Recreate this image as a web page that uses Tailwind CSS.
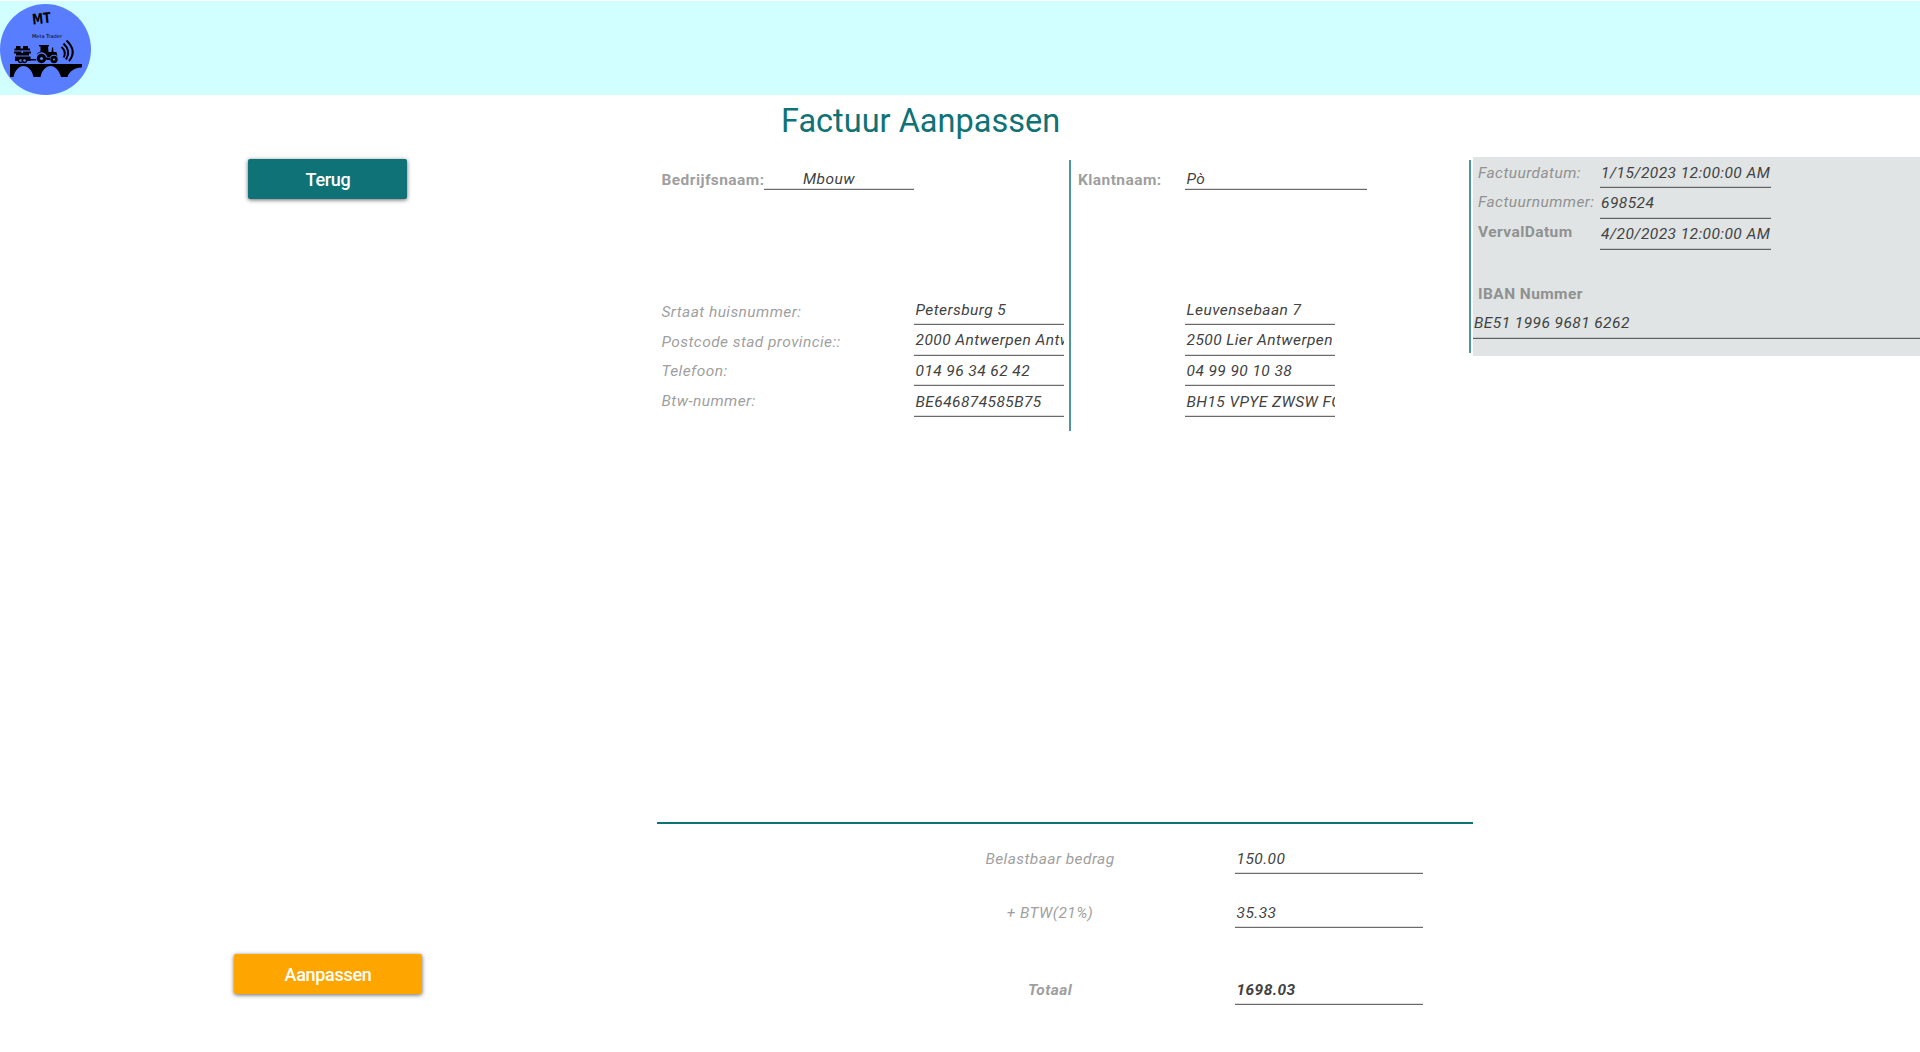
<!DOCTYPE html>
<html lang="nl">
<head>
<meta charset="utf-8">
<title>Factuur Aanpassen</title>
<script src="https://cdn.jsdelivr.net/npm/@tailwindcss/browser@4"></script>
</head>
<body class="flex h-[1052px] w-[1920px] flex-col overflow-hidden bg-white pt-px font-['Roboto',sans-serif] text-[15.5px] leading-5 tracking-[0.43px] text-[#424242]">
<header class="flex h-[94px] shrink-0 items-end bg-[#d1ffff]">
  <svg class="h-[91px] w-[91px] tracking-normal" viewBox="0 0 91 91">
    <circle cx="45.5" cy="45.5" r="45.5" fill="#587dff"/>
    <g transform="rotate(-6 41 13)" fill="#000" font-family="DejaVu Sans" font-weight="bold">
      <text x="32" y="19.500" font-size="14.500" textLength="18.500" lengthAdjust="spacingAndGlyphs">MT</text>
    </g>
    <text x="32" y="33.500" font-size="5" font-family="DejaVu Sans" textLength="30" lengthAdjust="spacingAndGlyphs">Meta Trader</text>
    <!-- bridge -->
    <path d="M10 60H82V63.500C76 63 69 67 67.500 73H61C59 66 55 62 50.500 62S42 66 40.500 73H33.500C32 66 28 62 23.500 62S15 66 13.500 73H10Z"/>
    <!-- cart -->
    <path d="M15 52.500H30.500V57H15ZM14 47.500H21.500V49H23V47.500H31V49.500H29V51.500H16V49.500H14ZM16 42H20.500V44.500H23V42H28V44.500H30V46.500H14.500V44.500H16ZM30.500 55H37V56.500H30.500Z"/>
    <g fill="#587dff" stroke="#000" stroke-width="1.300"><circle cx="20.500" cy="56.500" r="2"/><circle cx="24.500" cy="56.500" r="2"/></g>
    <!-- tractor -->
    <path d="M39 41H49V42.500H48L48.500 48H51.500L52 44L53 43L53.500 48H56.500L57.500 53H37V50C38 48.500 39 48 40.500 47.500V42.500H39Z"/>
    <circle cx="41.500" cy="54" r="5.700" fill="#587dff"/><circle cx="54" cy="55.300" r="4.500" fill="#587dff"/>
    <circle cx="41.500" cy="54.500" r="4.700"/><circle cx="54" cy="55.500" r="3.700"/>
    <circle cx="41.500" cy="54.500" r="1.600" fill="#587dff"/><circle cx="54" cy="55.500" r="1.100" fill="#587dff"/>
    <path d="M45.500 53.500H50V56H46.500Z"/>
    <!-- signal -->
    <g fill="none" stroke="#000" stroke-width="2"><path d="M61.500 43Q67 48 63.500 53.500"/><path d="M63.500 39.500Q71.500 47 66 55.500"/><path d="M66.500 36.500Q77.500 47 69 57"/></g>
  </svg>
</header>

<main class="grid min-h-0 flex-1 grid-cols-[657px_816px_447px] grid-rows-[62px_1fr]">
  <h1 class="col-span-3 pt-[6px] pl-[781px] text-[32.5px] leading-[40px] tracking-normal text-[#0e7276]">Factuur Aanpassen</h1>

  <aside class="flex flex-col items-center justify-between pb-[58px] pt-[2px] pr-[2px] text-lg font-medium tracking-[-0.3px] text-white">
    <button class="h-10 w-[159px] rounded-[2px] bg-[#0e7276] pt-[2px] pl-px shadow-[0_1px_4px_rgba(0,0,0,.6)]">Terug</button>
    <button class="h-10 w-[188px] rounded-[2px] bg-[#ffa500] pt-[2px] pl-px shadow-[0_1px_4px_rgba(0,0,0,.6)]">Aanpassen</button>
  </aside>

  <section class="flex flex-col">
    <div class="flex h-[274px] pt-[3px]">
      <div class="flex h-[271px] w-[414px] flex-col border-r-2 border-[#4d979a] pl-[4.5px]">
        <div class="flex h-[30px] items-end">
          <label class="w-[102.5px] font-bold whitespace-nowrap text-[#9f9f9f]">Bedrijfsnaam:</label>
          <div class="h-[30px] w-[150px] border-b border-[#6b6b6b] pt-[9px] pl-[39px] italic shadow-[inset_0_-1px_0_#ddd]">Mbouw</div>
        </div>
        <div class="mt-[104px] flex">
          <div class="w-[252.5px] pt-2 text-[#9f9f9f] italic">
            <p class="h-[30px]">Srtaat huisnummer:</p>
            <p class="h-[29px]">Postcode stad provincie::</p>
            <p class="h-[30px]">Telefoon:</p>
            <p>Btw-nummer:</p>
          </div>
          <div class="w-[150px] overflow-hidden whitespace-nowrap italic">
            <p class="h-[31px] border-b border-[#6b6b6b] pt-[6px] pl-[1.5px] shadow-[inset_0_-1px_0_#ddd]">Petersburg 5</p>
            <p class="h-[31px] border-b border-[#6b6b6b] pt-[5px] pl-[1.5px] shadow-[inset_0_-1px_0_#ddd]">2000 Antwerpen Antwerpen</p>
            <p class="h-[30px] border-b border-[#6b6b6b] pt-[5px] pl-[1.5px] shadow-[inset_0_-1px_0_#ddd]">014 96 34 62 42</p>
            <p class="h-[31px] border-b border-[#6b6b6b] pt-[6px] pl-[1.5px] shadow-[inset_0_-1px_0_#ddd]">BE646874585B75</p>
          </div>
        </div>
      </div>
      <div class="flex h-[193px] w-[400px] flex-col border-r-2 border-[#4d979a] pl-[7px]">
        <div class="flex h-[30px] shrink-0 items-end">
          <label class="w-[107px] font-bold text-[#9f9f9f]">Klantnaam:</label>
          <div class="h-[30px] w-[182px] border-b border-[#6b6b6b] pt-[9px] pl-[1.5px] italic shadow-[inset_0_-1px_0_#ddd]">Pò</div>
        </div>
        <div class="mt-[104px] ml-[107px] w-[150px] shrink-0 overflow-hidden whitespace-nowrap italic">
          <p class="h-[31px] border-b border-[#6b6b6b] pt-[6px] pl-[1.5px] shadow-[inset_0_-1px_0_#ddd]">Leuvensebaan 7</p>
          <p class="h-[31px] border-b border-[#6b6b6b] pt-[5px] pl-[1.5px] shadow-[inset_0_-1px_0_#ddd]">2500 Lier Antwerpen</p>
          <p class="h-[30px] border-b border-[#6b6b6b] pt-[5px] pl-[1.5px] shadow-[inset_0_-1px_0_#ddd]">04 99 90 10 38</p>
          <p class="h-[31px] border-b border-[#6b6b6b] pt-[6px] pl-[1.5px] shadow-[inset_0_-1px_0_#ddd]">BH15 VPYE ZWSW FGHT</p>
        </div>
      </div>
    </div>
    <div class="mt-[391px] border-t-2 border-[#0e7276] pt-[20px] italic">
      <div class="flex h-[54px] pl-[208px]">
        <p class="w-[370px] pt-[5px] text-center text-[#9f9f9f]">Belastbaar bedrag</p>
        <p class="h-[30px] w-[188px] border-b border-[#6b6b6b] pt-[5px] pl-[1.5px] shadow-[inset_0_-1px_0_#ddd]">150.00</p>
      </div>
      <div class="flex h-[77px] pl-[208px]">
        <p class="w-[370px] pt-[5px] text-center text-[#9f9f9f]">+ BTW(21%)</p>
        <p class="h-[30px] w-[188px] border-b border-[#6b6b6b] pt-[5px] pl-[1.5px] shadow-[inset_0_-1px_0_#ddd]">35.33</p>
      </div>
      <div class="flex pl-[208px] font-bold">
        <p class="w-[370px] pt-[5px] text-center text-[#9f9f9f]">Totaal</p>
        <p class="h-[30px] w-[188px] border-b border-[#6b6b6b] pt-[5px] pl-[1.5px] shadow-[inset_0_-1px_0_#ddd]">1698.03</p>
      </div>
    </div>
  </section>

  <section class="h-[199px] bg-[#e0e4e4]">
    <div class="flex h-[127px]">
      <div class="w-[127px] pt-[6px] pl-[5px] whitespace-nowrap text-[#909191] italic">
        <p class="h-[29px]">Factuurdatum:</p>
        <p class="h-[30px]">Factuurnummer:</p>
        <p class="font-bold not-italic">VervalDatum</p>
      </div>
      <div class="w-[171px] whitespace-nowrap italic">
        <p class="h-[31px] border-b border-[#606262] pt-[6px] pl-[1px] shadow-[inset_0_-1px_0_#c4c7c7]">1/15/2023 12:00:00 AM</p>
        <p class="h-[31px] border-b border-[#606262] pt-[5px] pl-[1px] shadow-[inset_0_-1px_0_#c4c7c7]">698524</p>
        <p class="h-[31px] border-b border-[#606262] pt-[5px] pl-[1px] shadow-[inset_0_-1px_0_#c4c7c7]">4/20/2023 12:00:00 AM</p>
      </div>
    </div>
    <p class="pl-[5px] font-bold text-[#909191]">IBAN Nummer</p>
    <p class="h-[35px] border-b border-[#606262] pt-[9px] pl-[1px] italic shadow-[inset_0_-1px_0_#c4c7c7]">BE51 1996 9681 6262</p>
  </section>
</main>
</body>
</html>
